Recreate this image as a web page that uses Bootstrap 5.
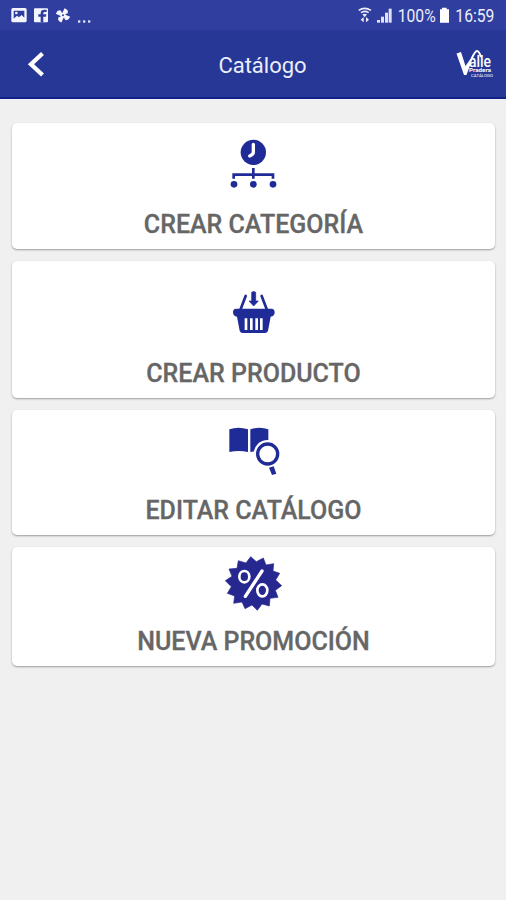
<!DOCTYPE html>
<html lang="es">
<head>
<meta charset="utf-8">
<meta name="viewport" content="width=device-width, initial-scale=1">
<title>Catálogo</title>
<link href="https://cdn.jsdelivr.net/npm/bootstrap@5.3.0/dist/css/bootstrap.min.css" rel="stylesheet">
<style>
body{font-family:Roboto,"Liberation Sans",sans-serif;background:#f0f0f0;min-height:900px}
svg{display:block;flex:none;overflow:visible}
.status-bar{height:30px;background:#303f9f;padding:0 11px}
.app-bar{height:69px;background:#273796;border-bottom:2px solid #13208a;padding:0 11px 0 26px;display:grid;grid-template-columns:60px 1fr 56px}
.app-title{font-size:22px;line-height:30px;color:#eceefa;padding-top:4px}
.menu-list{padding:24px 11px 0 12px;gap:12px}
.tile{border:0;border-radius:5px;background:#fff;box-shadow:0 1px 2px rgba(0,0,0,.36);color:#666;display:flex;flex-direction:column;align-items:center}
.tile svg{color:#1f2b96}
.tile-label{font-size:25px;line-height:30px;font-weight:500;white-space:nowrap;-webkit-text-stroke:.3px #666}
.t1{height:126px;padding-top:7px}.t1 .tile-label{margin-top:10px}
.t2{height:137px;padding-top:19px}.t2 .tile-label{margin-top:14px}
.t3{height:125px;padding-top:5px}.t3 .tile-label{margin-top:11px}
.t4{height:119px;padding-top:3px}.t4 .tile-label{margin-top:12px}
</style>
</head>
<body>
<header>
  <div class="status-bar d-flex justify-content-between">
    <svg width="82" height="28" viewBox="33 0 246 84">
      <rect x="34" y="24" width="46" height="43" rx="5" fill="#f4f5ff"/>
      <path d="M41 32h32v21l-8-8-8 7-6-5-10 9z" fill="#303f9f"/><circle cx="49" cy="39" r="4" fill="#f4f5ff"/>
      <rect x="102" y="25" width="42" height="42" rx="3" fill="#f4f5ff"/>
      <path d="M122 67V50h-7v-7h7v-4q0-10 11-10h7v7h-5q-5 0-5 4v3h9l-1 7h-8v17z" fill="#303f9f"/>
      <g fill="#f4f5ff" transform="translate(189 46) rotate(12)"><path id="blade" d="M-4-3 0-22Q15-19 12-9L4-3z"/><use href="#blade" transform="rotate(90)"/><use href="#blade" transform="rotate(180)"/><use href="#blade" transform="rotate(270)"/><circle r="7"/></g><circle cx="189" cy="46" r="3" fill="#303f9f"/>
      <g fill="#dfe2fa"><rect x="234" y="61" width="7" height="7"/><rect x="249" y="61" width="7" height="7"/><rect x="264" y="61" width="7" height="7"/></g>
    </svg>
    <svg width="137" height="28" viewBox="24 0 411 84">
      <g fill="none" stroke="#eceefa" stroke-width="5"><path d="M26 31q18-12 37 0M33 38q11-8 23 0"/></g>
      <path d="M37 43q7-4 14 0l-7 9zM41 51v16l-9-8zM48 67V51l9 8z" fill="#eceefa"/>
      <g fill="#dfe2fa"><rect x="81" y="60" width="9" height="8"/><rect x="93" y="50" width="9" height="18"/><rect x="105" y="38" width="9" height="30"/><rect x="116" y="26" width="9" height="42"/></g>
      <g fill="#eceefa" font-family="Roboto, sans-serif" font-size="54"><text x="143" y="67" textLength="114" lengthAdjust="spacingAndGlyphs">100%</text><text x="316" y="67" textLength="117" lengthAdjust="spacingAndGlyphs">16:59</text></g>
      <path d="M276 23h14v5h7v40h-27V28h6z" fill="#fff"/>
    </svg>
  </div>
  <nav class="app-bar align-items-center">
    <svg width="20" height="28" viewBox="0 0 20 28"><path d="M16.500 3.500 5 14.200 16.500 25" fill="none" stroke="#fff" stroke-width="4.300"/></svg>
    <div class="app-title text-center">Catálogo</div>
    <svg class="ms-auto" width="39" height="28" viewBox="0 0 39 28" fill="#fff">
      <path d="M.5 3.500 5 2 9.500 16 14.500 9 16 10 10.500 25 8 25z"/>
      <path d="M15.500 9Q19 1 21 1t4 6" fill="none" stroke="#fff" stroke-width="2"/>
      <text x="13" y="17" font-family="Roboto, sans-serif" font-weight="500" font-size="16" textLength="22" lengthAdjust="spacingAndGlyphs">alle</text>
      <text x="13" y="22" font-family="Roboto, sans-serif" font-weight="700" font-size="4.500" textLength="22" lengthAdjust="spacingAndGlyphs">Pradera</text>
      <text x="15" y="26.500" font-family="Roboto, sans-serif" font-size="4" textLength="22" lengthAdjust="spacingAndGlyphs">CATÁLOGO</text>
    </svg>
  </nav>
</header>
<main class="menu-list d-flex flex-column">
  <a class="card tile t1 text-decoration-none" href="#">
    <svg width="107" height="70" viewBox="0 0 321 210" fill="currentColor">
      <circle cx="160" cy="67" r="38"/><path d="M160 43v24q0 7-11 11" fill="none" stroke="#fff" stroke-width="10" stroke-linecap="round" stroke-linejoin="round"/>
      <path d="M160 114v32M101 146v-12h118v12" fill="none" stroke="currentColor" stroke-width="8"/>
      <circle cx="102" cy="163" r="10"/><circle cx="160" cy="163" r="10"/><circle cx="219" cy="163" r="10"/>
    </svg>
    <span class="tile-label">CREAR CATEGORÍA</span>
  </a>
  <a class="card tile t2 text-decoration-none" href="#">
    <svg width="107" height="65" viewBox="0 0 321 195" fill="currentColor">
      <path d="M137 48 121 90M185 48l16 42" fill="none" stroke="currentColor" stroke-width="8" stroke-linecap="round"/>
      <path d="M155 37q6-5 12 0v26h8l-14 15-14-15h8z" stroke="currentColor" stroke-width="2"/>
      <path d="M108 86h106q10 0 10 11 0 12-12 13l-8 42q-2 7-9 7h-67q-7 0-9-7l-8-42q-12-1-12-13 0-11 9-11z"/>
      <path d="M138 115v35M154 115v35M170 115v35M184 115v35" stroke="#fff" stroke-width="8"/>
    </svg>
    <span class="tile-label">CREAR PRODUCTO</span>
  </a>
  <a class="card tile t3 text-decoration-none" href="#">
    <svg width="107" height="70" viewBox="0 0 321 210" fill="currentColor">
      <path d="M88 43q27-10 56 0v68q-28-6-56 0zM151 43q28-10 54 0v68q-27-6-54 0z"/>
      <circle cx="203" cy="117" r="42" fill="#fff"/><circle cx="203" cy="117" r="30" fill="none" stroke="currentColor" stroke-width="10"/>
      <path d="M207 158l14-4 8 22-13 4z"/>
    </svg>
    <span class="tile-label">EDITAR CATÁLOGO</span>
  </a>
  <a class="card tile t4 text-decoration-none" href="#">
    <svg width="107" height="65" viewBox="0 15 321 195">
      <g transform="translate(-210 -165)">
        <path fill="#27288f" stroke="#27288f" stroke-width="2" stroke-linejoin="round" d="M362 200 379 215 400 204 408 225 431 221 429 243 449 250 437 270 455 287 436 301 444 322 420 325 418 348 396 342 382 361 366 345 345 356 336 336 311 340 314 318 292 310 304 290 286 272 306 259 297 237 321 235 325 212 348 219z"/>
        <path d="M396 243 346 319" stroke="#fff" stroke-width="10" stroke-linecap="round"/>
        <g fill="none" stroke="#fff" stroke-width="8"><ellipse cx="343" cy="260" rx="15" ry="17"/><ellipse cx="397" cy="301" rx="15" ry="18"/></g>
      </g>
    </svg>
    <span class="tile-label">NUEVA PROMOCIÓN</span>
  </a>
</main>
<script src="https://cdn.jsdelivr.net/npm/bootstrap@5.3.0/dist/js/bootstrap.bundle.min.js"></script>
</body>
</html>
